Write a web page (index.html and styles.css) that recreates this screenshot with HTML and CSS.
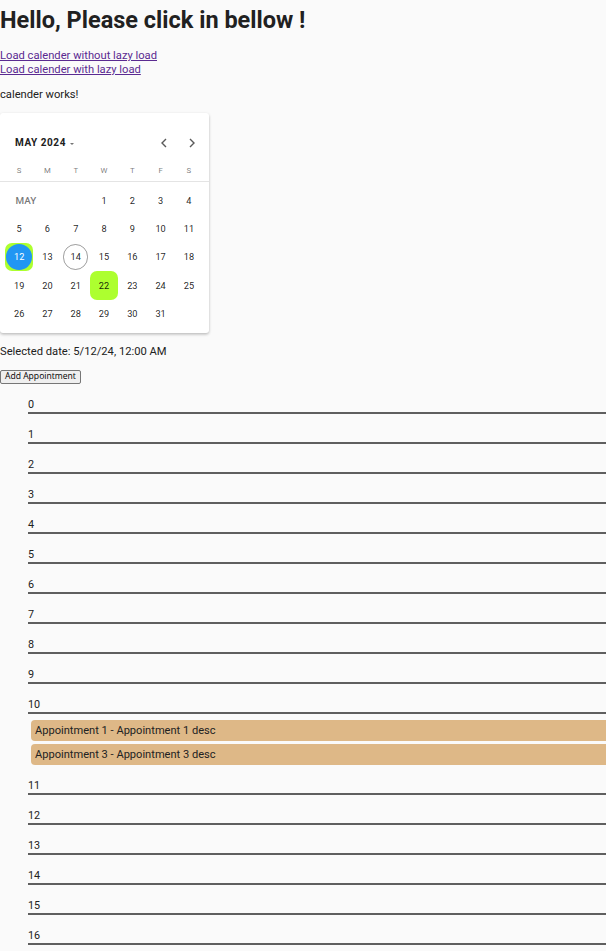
FILE: index.html
```html
<!DOCTYPE html>
<html lang="en">
<head>
<meta charset="utf-8">
<title>Calendar</title>
<link rel="stylesheet" href="styles.css">
</head>
<body>
<h1 class="title">Hello, Please click in bellow !</h1>
<div class="links">
  <a href="#" class="link">Load calender without lazy load</a><br>
  <a href="#" class="link">Load calender with lazy load</a>
</div>
<p class="works">calender works!</p>

<div class="calendar">
  <div class="cal-header">
    <div class="period">MAY 2024<span class="caret"></span></div>
    <div class="nav">
      <span class="nav-btn"><svg width="10" height="10" viewBox="0 0 10 10"><polyline points="7,1 3,5 7,9" fill="none" stroke="#5a5a5a" stroke-width="1.4"/></svg></span>
      <span class="nav-btn"><svg width="10" height="10" viewBox="0 0 10 10"><polyline points="3,1 7,5 3,9" fill="none" stroke="#5a5a5a" stroke-width="1.4"/></svg></span>
    </div>
  </div>
  <div class="dow">
    <span>S</span><span>M</span><span>T</span><span>W</span><span>T</span><span>F</span><span>S</span>
  </div>
  <div class="divider"></div>
  <div class="days">
    <div class="month-label">MAY</div>
    <div class="cell"><span class="num">1</span></div>
    <div class="cell"><span class="num">2</span></div>
    <div class="cell"><span class="num">3</span></div>
    <div class="cell"><span class="num">4</span></div>
    <div class="cell"><span class="num">5</span></div>
    <div class="cell"><span class="num">6</span></div>
    <div class="cell"><span class="num">7</span></div>
    <div class="cell"><span class="num">8</span></div>
    <div class="cell"><span class="num">9</span></div>
    <div class="cell"><span class="num">10</span></div>
    <div class="cell"><span class="num">11</span></div>
    <div class="cell marked"><span class="num selected">12</span></div>
    <div class="cell"><span class="num">13</span></div>
    <div class="cell"><span class="num today">14</span></div>
    <div class="cell"><span class="num">15</span></div>
    <div class="cell"><span class="num">16</span></div>
    <div class="cell"><span class="num">17</span></div>
    <div class="cell"><span class="num">18</span></div>
    <div class="cell"><span class="num">19</span></div>
    <div class="cell"><span class="num">20</span></div>
    <div class="cell"><span class="num">21</span></div>
    <div class="cell marked"><span class="num">22</span></div>
    <div class="cell"><span class="num">23</span></div>
    <div class="cell"><span class="num">24</span></div>
    <div class="cell"><span class="num">25</span></div>
    <div class="cell"><span class="num">26</span></div>
    <div class="cell"><span class="num">27</span></div>
    <div class="cell"><span class="num">28</span></div>
    <div class="cell"><span class="num">29</span></div>
    <div class="cell"><span class="num">30</span></div>
    <div class="cell"><span class="num">31</span></div>
  </div>
</div>

<p class="selected-date">Selected date: 5/12/24, 12:00 AM</p>
<div class="actions"><button class="add-btn" type="button">Add Appointment</button></div>

<div class="schedule">
  <div class="hour">0</div>
  <div class="hour">1</div>
  <div class="hour">2</div>
  <div class="hour">3</div>
  <div class="hour">4</div>
  <div class="hour">5</div>
  <div class="hour">6</div>
  <div class="hour">7</div>
  <div class="hour">8</div>
  <div class="hour">9</div>
  <div class="hour">10</div>
  <div class="appts">
    <div class="appt">Appointment 1 - Appointment 1 desc</div>
    <div class="appt">Appointment 3 - Appointment 3 desc</div>
  </div>
  <div class="hour">11</div>
  <div class="hour">12</div>
  <div class="hour">13</div>
  <div class="hour">14</div>
  <div class="hour">15</div>
  <div class="hour">16</div>
</div>
</body>
</html>
```

FILE: styles.css
```css
html, body {
  overflow: hidden;
}
body {
  margin: 0;
  background: #fafafa;
  color: #212121;
  font-family: Roboto, "Liberation Sans", sans-serif;
  font-size: 11.2px;
  line-height: 14px;
}
.title {
  margin: 7px 0 0;
  font-size: 23.5px;
  line-height: 26px;
  font-weight: 700;
}
.links {
  margin-top: 16px;
}
.link {
  color: #5a2a91;
  text-decoration: underline;
}
.works {
  margin: 11px 0 0;
}
.calendar {
  margin-top: 10.5px;
  width: 209px;
  height: 220px;
  box-sizing: border-box;
  background: #fff;
  border-radius: 3px;
  box-shadow: 0 1px 3px rgba(0,0,0,.18), 0 2px 3px rgba(0,0,0,.1);
  padding-top: 16px;
}
.cal-header {
  height: 28px;
  display: flex;
  align-items: center;
  justify-content: space-between;
  padding: 0 3.5px 0 15px;
}
.period {
  display: flex;
  align-items: center;
  font-size: 10px;
  font-weight: 700;
  line-height: 12px;
  letter-spacing: .55px;
  color: #202020;
}
.caret {
  margin-left: 4px;
  margin-top: 2px;
  width: 0;
  height: 0;
  border-left: 2.7px solid transparent;
  border-right: 2.7px solid transparent;
  border-top: 2.7px solid #757575;
}
.nav {
  display: flex;
}
.nav-btn {
  width: 28px;
  height: 28px;
  display: flex;
  align-items: center;
  justify-content: center;
}
.dow {
  margin-top: 8px;
  display: grid;
  grid-template-columns: repeat(7, 28.3px);
  padding-left: 5px;
  height: 12px;
  font-size: 7.8px;
  line-height: 12px;
  color: rgba(0,0,0,.54);
  text-align: center;
}
.divider {
  margin-top: 4px;
  height: 1px;
  background: #e4e4e4;
}
.days {
  padding: 5px 0 0 5px;
  display: grid;
  grid-template-columns: repeat(7, 28.3px);
  grid-auto-rows: 28.3px;
  font-size: 9.2px;
  color: rgba(0,0,0,.87);
}
.month-label {
  grid-column: span 3;
  display: flex;
  align-items: center;
  padding-left: 10.5px;
  font-size: 9.9px;
  font-weight: 500;
  color: rgba(0,0,0,.54);
}
.cell {
  display: flex;
  align-items: center;
  justify-content: center;
}
.cell.marked {
  background: #adff2f;
  border-radius: 7px;
}
.num {
  width: 25.5px;
  height: 25.5px;
  box-sizing: border-box;
  border-radius: 50%;
  display: flex;
  align-items: center;
  justify-content: center;
}
.num.selected {
  background: #2196f3;
  color: #fff;
  width: 26px;
  height: 26px;
}
.num.today {
  border: 1px solid rgba(0,0,0,.38);
}
.selected-date {
  margin: 12.5px 0 0;
}
.actions {
  margin-top: 11px;
  display: flex;
}
.add-btn {
  margin: 0;
  height: 13.5px;
  padding: 0 4px;
  font-family: "Open Sans", "Noto Sans", sans-serif;
  font-size: 8.6px;
  line-height: 11px;
  color: #000;
  background: #efefef;
  border: 1px solid #767676;
  border-radius: 2px;
}
.schedule {
  margin-left: 28px;
}
.hour {
  padding-top: 14px;
  line-height: 14px;
  font-size: 10.8px;
  border-bottom: 2px solid #5f5f5f;
}
.appts {
  padding-top: 6px;
  display: flex;
  flex-direction: column;
  gap: 3px;
}
.appt {
  margin-left: 3px;
  height: 21px;
  line-height: 21px;
  padding-left: 4px;
  font-size: 11.1px;
  background: #deb887;
  border-radius: 4px 0 0 4px;
  color: #222;
}
```
